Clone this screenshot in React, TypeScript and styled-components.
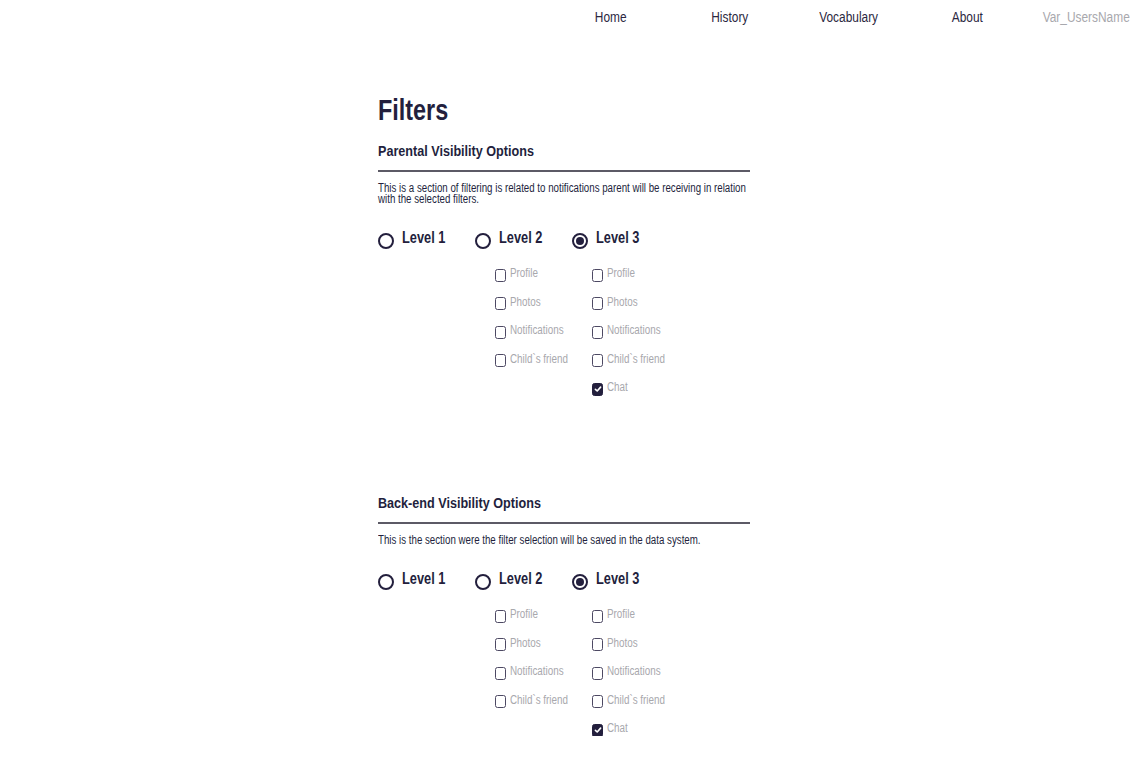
import styled, { createGlobalStyle, css } from 'styled-components';

const GlobalStyle = createGlobalStyle`
  body {
    margin: 0;
    background: #ffffff;
    font-family: "Liberation Sans", Arial, sans-serif;
    color: #231f3d;
  }
`;

// the design uses a narrow face; squeeze the regular one to the same widths
const narrow = (ratio: number) => css`
  display: inline-block;
  white-space: nowrap;
  transform: scaleX(${ratio});
  transform-origin: left center;
`;

interface LevelProps {
  label: string;
  checked: boolean;
  options: string[];
  checkedOptions: string[];
}

interface SectionProps {
  title: string;
  description: string;
  levels: LevelProps[];
}

const filterOptions = ['Profile', 'Photos', 'Notifications', 'Child`s friend'];
const chatOptions = [...filterOptions, 'Chat'];

const levels: LevelProps[] = [
  { label: 'Level 1', checked: false, options: [], checkedOptions: [] },
  { label: 'Level 2', checked: false, options: filterOptions, checkedOptions: [] },
  { label: 'Level 3', checked: true, options: chatOptions, checkedOptions: ['Chat'] },
];

const sections: SectionProps[] = [
  {
    title: 'Parental Visibility Options',
    description:
      'This is a section of filtering is related to notifications parent will be receiving in relation with the selected filters.',
    levels,
  },
  {
    title: 'Back-end Visibility Options',
    description: 'This is the section were the filter selection will be saved in the data system.',
    levels,
  },
];

const navItems = ['Home', 'History', 'Vocabulary', 'About'];

const CheckIcon = () => (
  <svg width="8" height="8" viewBox="0 0 8 8">
    <path d="M1.4 4.3 L3.2 6 L6.6 2.1" fill="none" stroke="#ffffff" strokeWidth="1.6" strokeLinecap="round" strokeLinejoin="round" />
  </svg>
);

const Level = ({ label, checked, options, checkedOptions }: LevelProps) => {
  return (
    <LevelColumn>
      <RadioRow>
        <Radio $checked={checked} />
        <RadioLabel>{label}</RadioLabel>
      </RadioRow>
      <OptionList>
        {options.map((opt) => {
          const on = checkedOptions.includes(opt);
          return (
            <OptionRow key={opt}>
              <Checkbox $checked={on}>{on && <CheckIcon />}</Checkbox>
              <OptionLabel>{opt}</OptionLabel>
            </OptionRow>
          );
        })}
      </OptionList>
    </LevelColumn>
  );
};

const Section = ({ title, description, levels }: SectionProps) => {
  return (
    <SectionBox>
      <SectionTitle>
        <span>{title}</span>
      </SectionTitle>
      <Divider />
      <Description>{description}</Description>
      <LevelRow>
        {levels.map((lvl) => (
          <Level key={lvl.label} {...lvl} />
        ))}
      </LevelRow>
    </SectionBox>
  );
};

const App = () => {
  return (
    <>
      <GlobalStyle />
      <NavBar>
        {navItems.map((item) => (
          <NavItem key={item}>
            <span>{item}</span>
          </NavItem>
        ))}
        <NavItem $muted>
          <span>Var_UsersName</span>
        </NavItem>
      </NavBar>
      <Main>
        <Heading>
          <span>Filters</span>
        </Heading>
        {sections.map((s) => (
          <Section key={s.title} {...s} />
        ))}
      </Main>
    </>
  );
};

const NavBar = styled.nav`
  display: flex;
  justify-content: flex-start;
  height: 35px;
  padding-left: 551px;
`;

const NavItem = styled.a<{ $muted?: boolean }>`
  width: 119px;
  flex-shrink: 0;
  text-align: center;
  font-size: 14px;
  line-height: 35px;
  color: ${({ $muted }) => ($muted ? '#a8a8ad' : '#2b2741')};
  cursor: pointer;

  span {
    ${narrow(0.85)};
    transform-origin: center center;
  }
`;

const Main = styled.main`
  width: 372px;
  padding-left: 378px;
  padding-top: 57px;
`;

const Heading = styled.h1`
  margin: 0 0 14px;
  font-size: 30px;
  line-height: 36px;
  font-weight: 700;
  color: #231f3d;

  span {
    ${narrow(0.78)};
  }
`;

const SectionBox = styled.section`
  &:not(:last-child) {
    height: 352px;
  }
`;

const SectionTitle = styled.h2`
  margin: 0;
  font-size: 14px;
  line-height: 18px;
  font-weight: 700;
  color: #231f3d;

  span {
    ${narrow(0.9)};
  }
`;

const Divider = styled.hr`
  margin: 10px 0 0;
  border: none;
  height: 2px;
  background: #5c5a66;
`;

const Description = styled.p`
  width: calc(372px / 0.81);
  margin: 11px 0 0;
  font-size: 12px;
  line-height: 11px;
  color: #231f3d;
  transform: scaleX(0.81);
  transform-origin: left top;
`;

const LevelRow = styled.div`
  display: flex;
  margin-top: 24px;
`;

const LevelColumn = styled.div`
  width: 97px;
  display: flex;
  flex-direction: column;
`;

const RadioRow = styled.div`
  display: flex;
  align-items: flex-start;
  gap: 8px;
`;

const Radio = styled.span<{ $checked: boolean }>`
  box-sizing: border-box;
  flex-shrink: 0;
  width: 16px;
  height: 16px;
  margin-top: 4px;
  border-radius: 50%;
  border: 2px solid #231f3d;
  display: flex;
  align-items: center;
  justify-content: center;

  &::after {
    content: '';
    width: 8px;
    height: 8px;
    border-radius: 50%;
    background: #231f3d;
    display: ${({ $checked }) => ($checked ? 'block' : 'none')};
  }
`;

const RadioLabel = styled.span`
  font-size: 16px;
  line-height: 18px;
  font-weight: 700;
  color: #231f3d;
  ${narrow(0.8)};
`;

const OptionList = styled.div`
  display: flex;
  flex-direction: column;
  gap: 14px;
  margin-top: 17px;
  padding-left: 20px;
`;

const OptionRow = styled.div`
  display: flex;
  align-items: center;
  gap: 4px;
  height: 14.5px;
`;

const Checkbox = styled.span<{ $checked: boolean }>`
  box-sizing: border-box;
  flex-shrink: 0;
  width: 11px;
  height: 13px;
  margin-top: 4px;
  border-radius: 2.5px;
  border: 1.5px solid ${({ $checked }) => ($checked ? '#231f3d' : '#4d4963')};
  background: ${({ $checked }) => ($checked ? '#231f3d' : '#ffffff')};
  display: flex;
  align-items: center;
  justify-content: center;
`;

const OptionLabel = styled.span`
  font-size: 12px;
  color: #a8a8ad;
  ${narrow(0.82)};
`;

export default App;
